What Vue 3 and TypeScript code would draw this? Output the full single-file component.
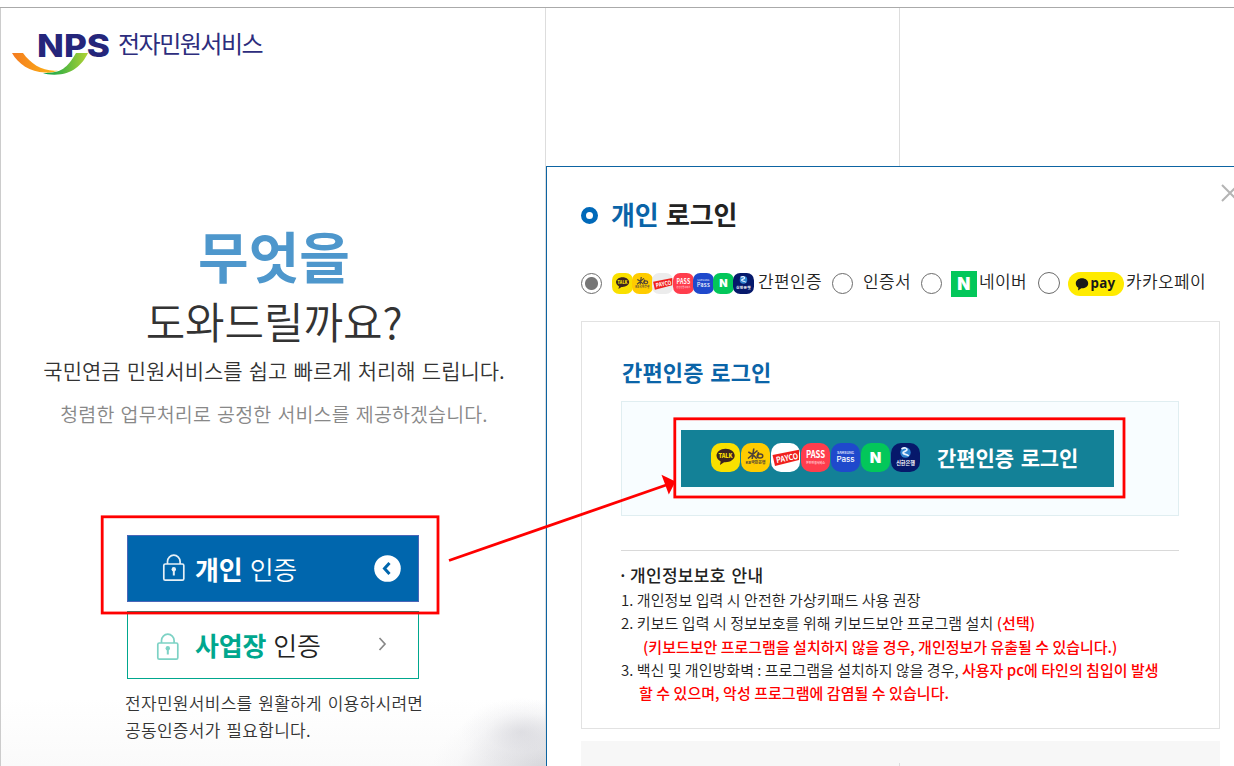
<script setup lang="ts">
import { h, type FunctionalComponent } from 'vue'

type Kind = 'talk' | 'kb' | 'payco' | 'pass' | 'samsung' | 'naver' | 'shinhan'

const providers: Kind[] = ['talk', 'kb', 'payco', 'pass', 'samsung', 'naver', 'shinhan']
const fills: Record<Kind, string> = {
  talk: '#f9e000',
  kb: '#ffcc00',
  payco: '#ffffff',
  pass: '#ff3d4d',
  samsung: '#1f49cc',
  naver: '#03c75a',
  shinhan: '#06196b',
}

const label = (text: string, y: number, size: number, fill: string, extra: Record<string, unknown> = {}) =>
  h('text', { x: 14.5, y, 'font-size': size, fill, 'text-anchor': 'middle', 'font-weight': 700, 'font-family': "'Noto Sans CJK KR', sans-serif", 'word-spacing': 0, ...extra }, text)

const glyphs: Record<Kind, () => unknown[]> = {
  talk: () => [
    h('path', { d: 'M14.500 5.800c-5 0-9 3-9 6.800c0 2.500 1.700 4.700 4.200 5.900l-.8 3.500 4.200-2.700c5.600.5 10.600-2.500 10.600-6.700c0-3.800-4-6.800-9-6.800z', fill: '#3b2420' }),
    label('TALK', 14.9, 6.2, '#f9e000', { 'font-weight': 900, textLength: 14, lengthAdjust: 'spacingAndGlyphs' }),
  ],
  kb: () => [
    h('path', { d: 'M7.300 9l5 2.800M12.800 5.500l-1.600 10.500M7 15.500l9.500-8M11.800 11.500l4 4.300M17.500 9l-1 5', stroke: '#4f4238', 'stroke-width': 1.6, fill: 'none' }),
    h('ellipse', { cx: 19, cy: 12.9, rx: 2.8, ry: 2, stroke: '#4f4238', 'stroke-width': 1.5, fill: 'none' }),
    label('KB국민은행', 21.4, 4, '#4f4238', { textLength: 20, lengthAdjust: 'spacingAndGlyphs' }),
  ],
  payco: () => [
    h('path', { d: 'M1.500 12L28 6.800V17L4 23z', fill: '#f0201c' }),
    label('PAYCO', 18.2, 8.2, '#fff', { transform: 'rotate(-11 14.5 15)', x: 16, textLength: 22, lengthAdjust: 'spacingAndGlyphs' }),
  ],
  pass: () => [
    label('PASS', 15, 10, '#fff', { textLength: 19, lengthAdjust: 'spacingAndGlyphs' }),
    label('본인인증서비스', 20.6, 3.6, '#ffc9cf', { textLength: 19, lengthAdjust: 'spacingAndGlyphs' }),
  ],
  samsung: () => [
    label('SAMSUNG', 11.300, 3.2, '#d5defa', { textLength: 17, lengthAdjust: 'spacingAndGlyphs' }),
    label('Pass', 19.200, 7.6, '#fff', { 'font-weight': 500, textLength: 18, lengthAdjust: 'spacingAndGlyphs', 'font-family': 'Inter, sans-serif' }),
  ],
  naver: () => [label('N', 20, 15, '#fff', { 'font-weight': 900, 'font-family': 'Inter, sans-serif' })],
  shinhan: () => [
    h('circle', { cx: 14.5, cy: 9.500, r: 5.2, fill: '#2f83cf' }),
    h('path', { d: 'M10.500 6c3-2 5.500-1 5.500.8s-4.500 1.500-4 3.300 5 .7 5.500 3', stroke: '#e9f2ff', 'stroke-width': 1.7, fill: 'none' }),
    label('신한은행', 21.8, 5.2, '#fff'),
  ],
}

const Badge: FunctionalComponent<{ kind: Kind }> = (p) =>
  h('svg', { viewBox: '0 0 29 29', class: 'badge', overflow: 'visible' }, [
    h('rect', { width: 29, height: 29, rx: 10, fill: fills[p.kind] }),
    ...(glyphs[p.kind]() as never[]),
  ])
Badge.props = ['kind']

const Lock: FunctionalComponent = () =>
  h('svg', { class: 'lock', viewBox: '0 0 24 28', fill: 'none', stroke: 'currentColor', 'stroke-width': 1.7 }, [
    h('rect', { x: 1.8, y: 10, width: 20, height: 16.200, rx: 1.500 }),
    h('path', { d: 'M5.500 10V7.500a6.300 6.300 0 0 1 12.600 0V10' }),
    h('circle', { cx: 11.8, cy: 15.200, r: 2.2, fill: 'currentColor', stroke: 'none' }),
    h('path', { d: 'M11.8 15v6.500', 'stroke-width': 2 }),
  ])
</script>

<template>
  <div class="page">
    <aside class="side">
      <header class="logo">
        <svg class="mark" width="100" height="46" viewBox="0 0 100 46" overflow="visible">
          <defs>
            <linearGradient id="warm"><stop offset="0" stop-color="#f47b20" /><stop offset="1" stop-color="#fdb913" /></linearGradient>
            <linearGradient id="fresh"><stop offset="0" stop-color="#00a14b" /><stop offset="1" stop-color="#b2d234" /></linearGradient>
          </defs>
          <text x="25" y="26.800" font-size="31" font-weight="800" font-family="Inter, sans-serif" fill="#25267b" textLength="73" lengthAdjust="spacingAndGlyphs">NPS</text>
          <path d="M0 23H11C19 34 31 42 46 40.500C43 42 38 43 33 42.500C18 42 6 34 0 23z" fill="url(#warm)" />
          <path d="M31 43C50 43 55 38 64 23H76C70 35 60 45 42 44.700C37 44.500 34 44 31 43z" fill="url(#fresh)" />
        </svg>
        <span class="brand">전자민원서비스</span>
      </header>

      <h1 class="ask"><strong>무엇을</strong><span>도와드릴까요?</span></h1>
      <p class="lead">국민연금 민원서비스를 쉽고 빠르게 처리해 드립니다.</p>
      <p class="sub">청렴한 업무처리로 공정한 서비스를 제공하겠습니다.</p>

      <nav class="choices">
        <a class="choice personal">
          <Lock /><span class="name"><b>개인</b> 인증</span>
          <svg class="go" width="27" height="27" viewBox="0 0 27 27"><circle cx="13.5" cy="13.5" r="13.3" fill="#fff" /><path d="M15.500 8L10.500 13.500L15.500 19" fill="none" stroke="#0066ad" stroke-width="3" /></svg>
        </a>
        <a class="choice company">
          <Lock /><span class="name"><b>사업장</b> 인증</span>
          <svg class="go" width="10" height="14" viewBox="0 0 10 14"><path d="M1.500 1L7 7L1.500 13" fill="none" stroke="#888" stroke-width="1.700" /></svg>
        </a>
      </nav>
      <p class="need">전자민원서비스를 원활하게 이용하시려면<br />공동인증서가 필요합니다.</p>
    </aside>

    <div class="gridline"></div>

    <section class="modal">
      <svg class="close" width="18" height="18" viewBox="0 0 18 18"><path d="M1 1L17 17M17 1L1 17" stroke="#b4b4b4" stroke-width="2" /></svg>
      <h2 class="title"><i class="ring"></i><span><em>개인</em> 로그인</span></h2>

      <div class="methods">
        <i class="radio on"></i>
        <span class="minis"><Badge v-for="k in providers" :key="k" :kind="k" :class="k" /></span>
        <span class="opt o1">간편인증</span>
        <i class="radio r2"></i><span class="opt o2">인증서</span>
        <i class="radio r3"></i>
        <svg class="nv" width="26" height="26" viewBox="0 0 26 26"><path fill="#03c75a" d="M0 0h26v26H0z" /><text x="13" y="19.200" font-size="17" font-weight="900" font-family="Inter, sans-serif" text-anchor="middle" fill="#fff">N</text></svg>
        <span class="opt o3">네이버</span>
        <i class="radio r4"></i>
        <svg class="kp" width="56" height="24" viewBox="0 0 56 24">
          <rect width="56" height="24" rx="12" fill="#ffeb00" />
          <path d="M14 6.300c-3.500 0-6.200 2.200-6.200 5.100 0 1.900 1.100 3.400 2.600 4.300l-.4 2.700 3.300-2.100c3.900.2 6.900-1.900 6.900-4.900 0-2.900-2.700-5.100-6.200-5.100z" fill="#191919" />
          <text x="22.500" y="16" font-size="15" font-weight="700" fill="#191919" font-family="'Noto Sans', sans-serif" textLength="25" lengthAdjust="spacingAndGlyphs">pay</text>
        </svg>
        <span class="opt o4">카카오페이</span>
      </div>

      <div class="panel">
        <h3>간편인증 로그인</h3>
        <div class="well">
          <button class="login"><span class="icons"><Badge v-for="k in providers" :key="k" :kind="k" /></span><span>간편인증 로그인</span></button>
        </div>
        <div class="notice">
          <h4><i class="dot">·</i>개인정보보호 안내</h4>
          <p class="n1">1. 개인정보 입력 시 안전한 가상키패드 사용 권장</p>
          <p class="n2">2. 키보드 입력 시 정보보호를 위해 키보드보안 프로그램 설치 <b>(선택)</b></p>
          <p class="n3"><b>(키보드보안 프로그램을 설치하지 않을 경우, 개인정보가 유출될 수 있습니다.)</b></p>
          <p class="n4">3. 백신 및 개인방화벽 : 프로그램을 설치하지 않을 경우, <b>사용자 pc에 타인의 침입이 발생</b></p>
          <p class="n5"><b>할 수 있으며, 악성 프로그램에 감염될 수 있습니다.</b></p>
        </div>
      </div>
      <div class="band"><i></i></div>
    </section>

    <svg class="marks" width="1234" height="766" viewBox="0 0 1234 766">
      <g fill="none" stroke="#f00" stroke-width="2.800">
        <rect x="102.200" y="516.800" width="335.800" height="96.200" />
        <rect x="674.800" y="418.800" width="449.200" height="78.200" />
        <path d="M449 560.500L667 484.800" />
      </g>
      <path d="M675.500 481.500L661.500 474.800L668.800 494.500z" fill="#f00" />
    </svg>
  </div>
</template>

<style>
body { margin: 0; overflow: hidden; background: #fff; }
</style>

<style scoped>
.page {
  position: relative;
  box-sizing: border-box;
  width: 1234px;
  height: 766px;
  overflow: hidden;
  display: grid;
  grid-template-columns: 546px 354px 1fr;
  margin: 0;
  padding-top: 8px;
  background: linear-gradient(#aaa, #aaa) 0 7px / 100% 1px no-repeat #fff;
  font-family: 'Noto Sans CJK KR', sans-serif;
  font-weight: 350;
  color: #222;
  word-spacing: 0.1em;
  white-space: nowrap;
}
h1, h2, h3, h4, p { margin: 0; font-weight: inherit; }
i, em { font-style: normal; }

.side {
  box-sizing: border-box;
  height: 758px;
  border-left: 1px solid #ccc;
  border-right: 1px solid #ddd;
  background:
    radial-gradient(ellipse 60px 34px at 520px 724px, rgba(205, 205, 212, .5), rgba(225, 225, 230, .2) 60%, transparent),
    radial-gradient(ellipse 125px 75px at 555px 765px, rgba(196, 196, 202, .75), rgba(210, 210, 216, .45) 50%, rgba(235, 235, 238, .2) 80%, transparent),
    linear-gradient(transparent 690px, #fafafa 758px);
}
.logo { display: flex; height: 68px; padding: 22px 0 0 11px; box-sizing: border-box; }
.brand { margin-left: 6px; font-size: 24px; line-height: 30px; letter-spacing: -1.5px; font-weight: 400; color: #2d2d7d; margin-top: -2px; }
.ask { display: flex; flex-direction: column; align-items: center; margin-top: 148px; padding-left: 2px; line-height: 60px; }
.ask strong { font-size: 55px; font-weight: 700; color: #4e97cc; }
.ask span { margin-top: 6px; font-size: 43px; letter-spacing: -.1px; color: #333; }
.lead, .sub { padding-left: 2px; text-align: center; line-height: 30px; }
.lead { margin-top: 5px; font-size: 21px; letter-spacing: -.03px; color: #333; }
.sub { margin-top: 14px; font-size: 19.5px; letter-spacing: .14px; color: #888; }
.choices { display: flex; flex-direction: column; gap: 9px; margin: 106px 0 0 126px; width: 292px; }
.choice { display: flex; align-items: center; box-sizing: border-box; height: 67px; border: 1px solid #4a66b8; background: #0066ad; color: #fff; font-size: 26px; line-height: 40px; }
.company { height: 68px; border-color: #00a78e; background: #fff; color: #222; }
.company b { color: #00a78e; }
.choice b { font-weight: 700; }
.lock { width: 24px; height: 28px; margin: -2px 0 0 34px; opacity: .9; }
.company .lock { margin: 4px 0 0 28px; color: #6fcebf; }
.name { margin-left: 9px; letter-spacing: -.2px; }
.company .name { margin-left: 15px; }
.go { margin: 0 17px 0 auto; }
.company .go { margin-right: 30px; margin-top: -2px; }
.need { margin: 10px 0 0 124px; font-size: 17px; line-height: 27px; letter-spacing: .3px; color: #333; }

.gridline { border-right: 1px solid #ddd; box-sizing: border-box; }

.modal {
  position: absolute;
  left: 546px;
  top: 166px;
  width: 720px;
  height: 640px;
  box-sizing: border-box;
  border: 1px solid #0d64a2;
  background: #fff;
  padding: 27px 0 0 34px;
}
.close { position: absolute; left: 674px; top: 17px; }
.title { display: flex; align-items: center; height: 40px; font-size: 26px; line-height: 40px; font-weight: 700; letter-spacing: -.15px; }
.title em { color: #0a64a8; }
.ring { box-sizing: border-box; width: 17px; height: 17px; margin: 2px 13px 0 0; border: 5px solid #0069b9; border-radius: 50%; }
.methods { display: flex; align-items: center; height: 30px; margin-top: 34px; font-size: 17px; line-height: 30px; letter-spacing: .35px; }
.radio { box-sizing: border-box; flex: none; width: 21px; height: 21px; border: 1px solid #6b6b6b; border-radius: 50%; }
.on { background: radial-gradient(circle, #767676 6px, transparent 7px); }
.minis { display: flex; width: 142px; margin-left: 10px; }
.minis :deep(.badge) { flex: none; width: 21px; height: 21px; margin-right: -.8px; }
.minis :deep(.payco rect) { fill: #ececec; }
.opt { flex: none; margin-top: -4px; }
.o1 { width: 64px; margin-left: 4px; }
.r2 { margin-left: 10px; }
.o2 { margin-left: 10px; width: 48px; }
.r3 { margin-left: 10px; }
.nv { margin: 2px 0 0 9px; }
.o3 { width: 48px; margin-left: 2px; }
.r4 { width: 22px; height: 22px; margin-left: 11px; }
.kp { margin: 1px 0 0 8px; }
.o4 { margin-left: 2px; }

.panel { box-sizing: border-box; width: 639px; height: 408px; margin-top: 23px; padding: 31px 40px 0 39px; border: 1px solid #e2e2e2; }
.panel h3 { padding-left: 1px; font-size: 22px; line-height: 36px; font-weight: 700; letter-spacing: .15px; color: #0a64a8; }
.well { display: flex; justify-content: center; align-items: center; box-sizing: border-box; height: 115px; margin-top: 12px; border: 1px solid #e0eef1; background: #f8fdff; }
.login { display: flex; align-items: center; box-sizing: border-box; width: 433px; height: 57px; margin: 0 0 0 -5px; padding: 0 0 3px 30px; border: 0; background: #138197; color: #fff; font: 700 21px/40px 'Noto Sans CJK KR', sans-serif; letter-spacing: -.1px; word-spacing: .1em; }
.login > span:last-child { margin-top: -1px; }
.icons { display: flex; gap: 1px; margin-right: 17px; }
.icons :deep(.badge) { width: 29px; height: 29px; }
.notice { margin-top: 34px; border-top: 1px solid #d9d9d9; padding-top: 12px; font-size: 15px; line-height: 23.300px; letter-spacing: .06px; word-spacing: 0; }
.notice h4 { display: flex; font-size: 17px; line-height: 25px; font-weight: 500; letter-spacing: .3px; word-spacing: .1em; margin-top: -1px; margin-bottom: 1px; }
.dot { width: 12px; margin-left: -3px; }
.notice b { font-weight: 500; color: #f00; }
.n3 { padding-left: 22px; letter-spacing: 0; }
.n4 { letter-spacing: .02px; }
.n5 { padding-left: 18px; letter-spacing: .05px; }
.band { position: relative; width: 639px; height: 60px; margin-top: 12px; background: #f7f7f7; }
.band i { position: absolute; left: 318px; top: 22px; width: 1px; height: 30px; background: #ddd; }

.marks { position: absolute; left: 0; top: 0; pointer-events: none; }
</style>
